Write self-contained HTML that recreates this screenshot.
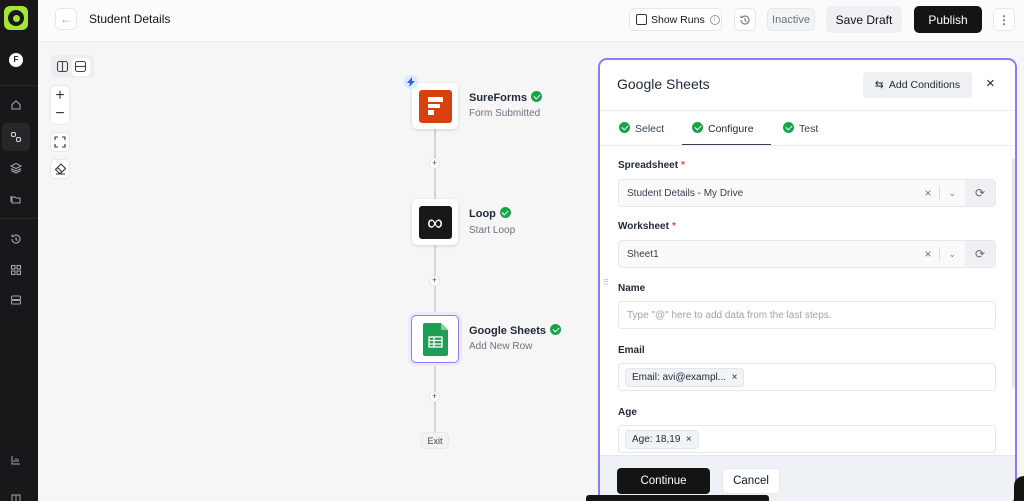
<!DOCTYPE html>
<html><head><meta charset="utf-8"><style>
*{box-sizing:border-box;margin:0;padding:0;white-space:nowrap}
html,body{width:1024px;height:501px;overflow:hidden}
body{font-family:"Liberation Sans",sans-serif;background:#f6f6f6;position:relative;color:#111827}
.abs{position:absolute}
.side{left:0;top:0;width:38px;height:501px;background:#18181b}
.sico{position:absolute;left:9px;width:20px;height:20px;display:flex;align-items:center;justify-content:center}
.hdr{left:38px;top:0;width:986px;height:42px;background:#fbfbfb;border-bottom:1px solid #ececec}
.btn{position:absolute;border:1px solid #e5e7eb;border-radius:5px;background:#fff;display:flex;align-items:center;justify-content:center;font-size:11px}
.card{position:absolute;width:46px;height:46px;background:#fff;border-radius:5px;box-shadow:0 1px 3px rgba(0,0,0,.15);display:flex;align-items:center;justify-content:center}
.ttl{position:absolute;font-size:11px;font-weight:bold;color:#1f2937}
.sub{position:absolute;font-size:10px;color:#6b7280}
.chk{display:inline-block;width:11px;height:11px;border-radius:50%;background:#16a34a;vertical-align:-1px;margin-left:4px;position:relative}
.chk:after{content:"";position:absolute;left:3.5px;top:2px;width:3px;height:5px;border:solid #fff;border-width:0 1.3px 1.3px 0;transform:rotate(45deg)}
.plus{position:absolute;left:429px;width:11px;height:11px;border-radius:50%;background:#fff;border:1px solid #e5e7eb;font-size:9px;line-height:9px;text-align:center;color:#555}
.panel{left:598px;top:58px;width:419px;height:446px;background:#fff;border:2px solid #8b7cf6;border-radius:9px;overflow:hidden}
.lbl{position:absolute;left:18px;font-size:10px;font-weight:bold;color:#1f2937}
.lbl i{color:#ef4444;font-style:normal;margin-left:3px}
.inp{position:absolute;left:18px;width:378px;height:28px;border:1px solid #e5e7eb;border-radius:4px;background:#fff;font-size:10px;color:#374151;display:flex;align-items:center;padding-left:8px}
.tag{background:#f1f3f6;border:1px solid #e2e5ea;border-radius:4px;padding:3px 6px;font-size:10px;color:#1f2937;margin-left:-2px}
</style></head><body>
<div class="abs side">
 <div class="abs" style="left:4px;top:6px;width:24px;height:24px;border-radius:6px;background:#a3e635;display:flex;align-items:center;justify-content:center"><div style="width:16px;height:16px;border-radius:50%;background:#18181b;display:flex;align-items:center;justify-content:center"><div style="width:7px;height:7px;border-radius:50%;background:#a3e635"></div></div></div>
 <div class="abs" style="left:9px;top:53px;width:14px;height:14px;border-radius:50%;background:#fff;color:#18181b;font-size:8px;font-weight:bold;text-align:center;line-height:14px">F</div>
 <div class="abs" style="left:0;top:85px;width:38px;height:1px;background:#2a2a2e"></div>
 <div class="abs" style="left:0;top:218px;width:38px;height:1px;background:#2a2a2e"></div>
 <div class="sico" style="top:95px;left:6px"><svg width="12" height="12" viewBox="0 0 12 12" fill="none" stroke="#9ca3af" stroke-width="1.1"><path d="M2 5.5L6 2l4 3.5V10H2z"/></svg></div>
 <div class="abs" style="left:2px;top:123px;width:28px;height:28px;border-radius:5px;background:#27272a"></div>
 <div class="sico" style="top:127px;left:6px"><svg width="12" height="12" viewBox="0 0 12 12" fill="none" stroke="#d4d4d8" stroke-width="1.1"><rect x="1.5" y="1.5" width="4" height="4" rx="1.5"/><rect x="6.5" y="6.5" width="4" height="4" rx="1.5"/></svg></div>
 <div class="sico" style="top:158px;left:6px"><svg width="12" height="12" viewBox="0 0 12 12" fill="none" stroke="#9ca3af" stroke-width="1.1"><path d="M6 1.5l5 2.5-5 2.5-5-2.5zM1 6.5l5 2.5 5-2.5M1 8.5l5 2.5 5-2.5"/></svg></div>
 <div class="sico" style="top:189px;left:6px"><svg width="12" height="12" viewBox="0 0 12 12" fill="none" stroke="#9ca3af" stroke-width="1.1"><path d="M2 4h3l1 1h4v5H2zM1 3v6"/></svg></div>
 <div class="sico" style="top:229px;left:6px"><svg width="12" height="12" viewBox="0 0 12 12" fill="none" stroke="#9ca3af" stroke-width="1.1"><path d="M2 6a4 4 0 1 0 1.2-2.8M2 1.5v2h2M6 4v2.5l1.5 1"/></svg></div>
 <div class="sico" style="top:260px;left:6px"><svg width="12" height="12" viewBox="0 0 12 12" fill="none" stroke="#9ca3af" stroke-width="1.1"><rect x="1.5" y="1.5" width="3.5" height="3.5"/><rect x="7" y="1.5" width="3.5" height="3.5"/><rect x="1.5" y="7" width="3.5" height="3.5"/><rect x="7" y="7" width="3.5" height="3.5"/></svg></div>
 <div class="sico" style="top:290px;left:6px"><svg width="12" height="12" viewBox="0 0 12 12" fill="none" stroke="#9ca3af" stroke-width="1.1"><rect x="1.5" y="2" width="9" height="3.5" rx="1"/><rect x="1.5" y="6.5" width="9" height="3.5" rx="1"/></svg></div>
 <div class="sico" style="top:450px;left:6px"><svg width="12" height="12" viewBox="0 0 12 12" fill="none" stroke="#9ca3af" stroke-width="1"><path d="M2 2v8h8M4 8V6M6 8V4M8 8V5"/></svg></div>
 <div class="sico" style="top:489px;left:6px"><svg width="12" height="12" viewBox="0 0 12 12" fill="none" stroke="#9ca3af" stroke-width="1"><rect x="2" y="2" width="8" height="9"/><path d="M6 2v9"/></svg></div>
</div>
<div class="abs hdr">
 <div class="btn" style="left:17px;top:8px;width:22px;height:22px;color:#9ca3af;font-size:12px">←</div>
 <div class="abs" style="left:51px;top:12px;font-size:12px;font-weight:500;color:#111">Student Details</div>
</div>
<div class="btn" style="left:629px;top:8px;width:93px;height:23px;justify-content:flex-start;padding-left:6px;font-size:10.5px"><span style="width:11px;height:11px;border:1px solid #333;border-radius:2px;margin-right:4px;flex:none"></span>Show Runs<span style="width:10px;height:10px;border:1px solid #999;border-radius:50%;margin-left:5px;font-size:6px;text-align:center;line-height:8px;color:#999;flex:none">i</span></div>
<div class="btn" style="left:734px;top:8px;width:22px;height:23px"><svg width="12" height="12" viewBox="0 0 12 12" fill="none" stroke="#777" stroke-width="1.1"><path d="M2 6a4 4 0 1 0 1.2-2.8M2 1.5v2h2M6 4v2.5l1.5 1"/></svg></div>
<div class="btn" style="left:767px;top:8px;width:48px;height:23px;background:#f3f4f6;color:#6b7280">Inactive</div>
<div class="btn" style="left:826px;top:6px;width:76px;height:27px;background:#eef0f3;border-color:#eef0f3;font-size:12px;color:#111">Save Draft</div>
<div class="btn" style="left:914px;top:6px;width:68px;height:27px;background:#141414;border-color:#141414;font-size:12px;color:#fff">Publish</div>
<div class="btn" style="left:993px;top:8px;width:22px;height:23px;color:#777;font-size:12px;font-weight:bold">⋮</div>

<div class="btn" style="left:51px;top:55px;width:43px;height:23px;background:#eceef1;border-color:#eceef1;justify-content:space-around;padding:0 2px">
 <svg width="13" height="13" viewBox="0 0 13 13" fill="none" stroke="#444" stroke-width="1.1"><rect x="1.5" y="1.5" width="10" height="10" rx="2"/><path d="M6.5 1.5v10"/></svg>
 <span style="background:#fff;border-radius:4px;width:18px;height:18px;display:flex;align-items:center;justify-content:center"><svg width="13" height="13" viewBox="0 0 13 13" fill="none" stroke="#444" stroke-width="1.1"><rect x="1.5" y="1.5" width="10" height="10" rx="2"/><path d="M1.5 6.5h10"/></svg></span>
</div>
<div class="btn" style="left:50px;top:85px;width:20px;height:40px;flex-direction:column;font-size:16px;color:#333;line-height:18px">+<br>−</div>
<div class="btn" style="left:50px;top:132px;width:20px;height:20px"><svg width="12" height="12" viewBox="0 0 12 12" fill="none" stroke="#333" stroke-width="1.1"><path d="M1 4V1h3M8 1h3v3M11 8v3H8M4 11H1V8"/></svg></div>
<div class="btn" style="left:50px;top:159px;width:20px;height:20px"><svg width="13" height="12" viewBox="0 0 13 12" fill="none" stroke="#333" stroke-width="1.1"><path d="M5 10L1.5 6.5 7 1l4.5 4.5L7 10zM3.5 4.5l4.5 4.5M2 11h9"/></svg></div>

<div class="abs" style="left:434px;top:128px;width:1.5px;height:305px;background:#d1d5db"></div>
<div class="card" style="left:412px;top:83px"><div style="width:33px;height:33px;background:#d9400f;border-radius:3px;display:flex;align-items:center;justify-content:center"><svg width="16" height="18" viewBox="0 0 16 18" fill="#fff"><path d="M1 0h15v5H1zM1 7h12v4H1zM1 13h6v5H1z"/></svg></div></div>
<div class="abs" style="left:404px;top:75px;width:14px;height:14px;border-radius:50%;background:#dbeafe;display:flex;align-items:center;justify-content:center"><svg width="8" height="10" viewBox="0 0 8 10"><path d="M5 0L0 6h3l-1 4 6-6H5z" fill="#2563eb"/></svg></div>
<div class="ttl" style="left:469px;top:91px">SureForms<span class="chk"></span></div>
<div class="sub" style="left:469px;top:108px">Form Submitted</div>
<div class="plus" style="top:158px">+</div>
<div class="card" style="left:412px;top:199px"><div style="width:33px;height:33px;background:#18181b;border-radius:3px;color:#fff;font-size:22px;text-align:center;line-height:33px">∞</div></div>
<div class="ttl" style="left:469px;top:207px">Loop<span class="chk"></span></div>
<div class="sub" style="left:469px;top:225px">Start Loop</div>
<div class="plus" style="top:275px">+</div>
<div class="card" style="left:411px;top:315px;width:48px;height:48px;border:1.5px solid #8b7cf6;box-shadow:0 0 0 3px #ede9fe"><svg width="25" height="33" viewBox="0 0 25 33"><path d="M2 0h16l7 7v24a2 2 0 0 1-2 2H2a2 2 0 0 1-2-2V2a2 2 0 0 1 2-2z" fill="#1e9e55"/><path d="M18 0v7h7z" fill="#7fd0a0"/><g fill="none" stroke="#fff" stroke-width="1.3"><rect x="6" y="14" width="13" height="10"/><path d="M6 17.5h13M6 21h13M11 14v10"/></g></svg></div>
<div class="ttl" style="left:469px;top:324px">Google Sheets<span class="chk"></span></div>
<div class="sub" style="left:469px;top:341px">Add New Row</div>
<div class="plus" style="top:391px">+</div>
<div class="btn" style="left:421px;top:432px;width:28px;height:17px;background:#f1f2f4;border-color:#e5e7eb;font-size:9px;color:#444">Exit</div>

<div class="abs panel">
 <div class="abs" style="left:17px;top:16px;font-size:14px;font-weight:500;color:#1f2937">Google Sheets</div>
 <div class="abs" style="left:263px;top:12px;width:109px;height:26px;background:#eef0f3;border-radius:4px;font-size:10.5px;display:flex;align-items:center;justify-content:center;color:#1f2937">⇆&nbsp; Add Conditions</div>
 <div class="abs" style="left:386px;top:15px;font-size:15px;color:#222">×</div>
 <div class="abs" style="left:0;top:50px;width:100%;height:1px;background:#eceef1"></div>
 <div class="abs" style="left:19px;top:62px;font-size:10.5px;color:#374151"><span class="chk" style="margin:0 5px 0 0"></span>Select</div>
 <div class="abs" style="left:92px;top:62px;font-size:10.5px;color:#1f2937;font-weight:500"><span class="chk" style="margin:0 5px 0 0"></span>Configure</div>
 <div class="abs" style="left:82px;top:84px;width:89px;height:1.5px;background:#374151"></div>
 <div class="abs" style="left:183px;top:62px;font-size:10.5px;color:#374151"><span class="chk" style="margin:0 5px 0 0"></span>Test</div>
 <div class="abs" style="left:0;top:85px;width:100%;height:1px;background:#eceef1"></div>
 <div class="abs" style="left:412px;top:98px;width:3px;height:230px;background:#e5e7eb;border-radius:2px"></div>
 <div class="lbl" style="top:100px">Spreadsheet<i>*</i></div>
 <div class="inp" style="top:119px;background:#fafafa;padding-right:0">Student Details - My Drive<span style="margin-left:auto;color:#777;font-size:12px">×</span><span style="width:1px;height:14px;background:#ddd;margin:0 8px"></span><span style="color:#777;font-size:9px">⌄</span><span style="width:30px;height:26px;background:#eef0f3;margin-left:9px;display:flex;align-items:center;justify-content:center;color:#666;font-size:12px">⟳</span></div>
 <div class="lbl" style="top:161px">Worksheet<i>*</i></div>
 <div class="inp" style="top:180px;background:#fafafa;padding-right:0">Sheet1<span style="margin-left:auto;color:#777;font-size:12px">×</span><span style="width:1px;height:14px;background:#ddd;margin:0 8px"></span><span style="color:#777;font-size:9px">⌄</span><span style="width:30px;height:26px;background:#eef0f3;margin-left:9px;display:flex;align-items:center;justify-content:center;color:#666;font-size:12px">⟳</span></div>
 <div class="abs" style="left:3px;top:218px;font-size:8px;color:#aaa;letter-spacing:-1px">⠿</div>
 <div class="lbl" style="top:223px">Name</div>
 <div class="inp" style="top:241px;color:#9ca3af">Type "@" here to add data from the last steps.</div>
 <div class="lbl" style="top:285px">Email</div>
 <div class="inp" style="top:303px"><span class="tag">Email: avi@exampl... &nbsp;×</span></div>
 <div class="lbl" style="top:347px">Age</div>
 <div class="inp" style="top:365px"><span class="tag">Age: 18,19 &nbsp;×</span></div>
 <div class="abs" style="left:0;top:395px;width:100%;height:60px;background:#eef2f6;border-top:1px solid #e5e7eb"></div>
 <div class="abs" style="left:17px;top:408px;width:93px;height:26px;background:#141414;border-radius:4px;color:#fff;font-size:11.5px;text-align:center;line-height:26px">Continue</div>
 <div class="abs" style="left:122px;top:408px;width:58px;height:26px;background:#fff;border:1px solid #e5e7eb;border-radius:4px;font-size:11.5px;text-align:center;line-height:24px">Cancel</div>
</div>
<div class="abs" style="left:586px;top:495px;width:183px;height:6px;background:#141414;border-radius:3px 3px 0 0"></div>
<div class="abs" style="left:1014px;top:476px;width:20px;height:30px;background:#141414;border-radius:10px 0 0 0"></div>
</body></html>
